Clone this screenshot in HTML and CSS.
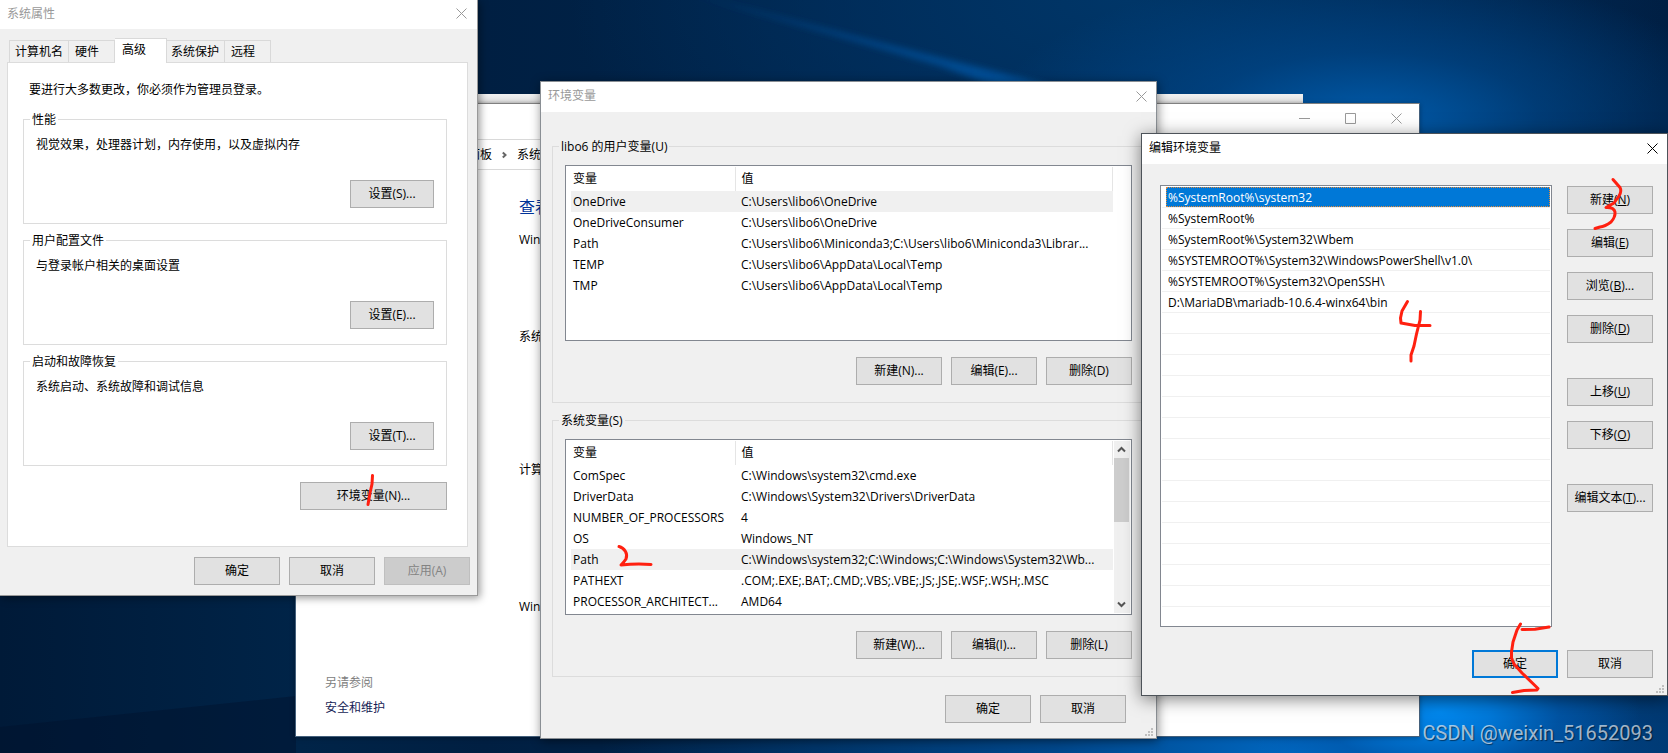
FILE: index.html
```html
<!DOCTYPE html>
<html lang="zh-CN">
<head>
<meta charset="utf-8">
<title>环境变量</title>
<link rel="stylesheet" href="styles.css">
</head>
<body>
<main class="desktop">
  <svg class="wallpaper" width="1668" height="753" viewBox="0 0 1668 753" aria-hidden="true">
    <defs>
      <filter id="soft" x="-20%" y="-50%" width="140%" height="200%"><feGaussianBlur stdDeviation="3"/></filter>
      <linearGradient id="beam" x1="0" x2="1"><stop offset="0" stop-color="#00468a" stop-opacity=".45"/><stop offset="1" stop-color="#0058a8" stop-opacity=".9"/></linearGradient>
    </defs>
    <path d="M690 -6L1045 84L1070 96L1020 96L940 66Z" fill="url(#beam)" filter="url(#soft)"/>
    <path d="M0 727L296 696V753H0Z" fill="#00112c" fill-opacity=".45"/>
  </svg>

  <div class="window window-rear"></div>

  <section class="window window-system" aria-label="系统">
    <header class="system-caption">
      <button class="caption-btn" aria-label="最小化"><svg width="11" height="11" viewBox="0 0 11 11"><path d="M0 5.5H11"/></svg></button>
      <button class="caption-btn" aria-label="最大化"><svg width="11" height="11" viewBox="0 0 11 11"><path d="M.5.5H10.5V10.5H.5Z"/></svg></button>
      <button class="caption-btn" aria-label="关闭"><svg width="11" height="11" viewBox="0 0 11 11"><path d="M.5.5L10.5 10.5M10.5.5L.5 10.5"/></svg></button>
    </header>
    <nav class="address">
      <span>控制面板</span>
      <svg width="5" height="8" viewBox="0 0 5 8"><path d="M.8 1.500L3.500 4L.8 6.500"/></svg>
      <span>系统</span>
    </nav>
    <div class="system-body">
      <aside class="see-also">
        <span class="see-also-title">另请参阅</span>
        <a href="#">安全和维护</a>
      </aside>
      <div class="system-info">
        <h1>查看</h1>
        <p class="info-edition">Windows</p>
        <p class="info-system">系统</p>
        <p class="info-computer">计算机</p>
        <p class="info-activation">Windows</p>
      </div>
    </div>
  </section>

  <section class="window window-props" aria-label="系统属性">
    <header class="titlebar">
      <span>系统属性</span>
      <button class="close" aria-label="关闭"><svg width="11" height="11" viewBox="0 0 11 11"><path d="M.5.5L10.5 10.5M10.5.5L.5 10.5"/></svg></button>
    </header>
    <div class="props-body">
      <div class="tabs" role="tablist">
        <button class="tab tab-name" role="tab">计算机名</button>
        <button class="tab tab-short" role="tab">硬件</button>
        <button class="tab tab-active" role="tab" aria-selected="true">高级</button>
        <button class="tab tab-guard" role="tab">系统保护</button>
        <button class="tab tab-short" role="tab">远程</button>
      </div>
      <div class="panel">
        <p class="notice">要进行大多数更改，你必须作为管理员登录。</p>
        <fieldset class="group">
          <legend>性能</legend>
          <p>视觉效果，处理器计划，内存使用，以及虚拟内存</p>
          <button class="btn btn-settings">设置(S)...</button>
        </fieldset>
        <fieldset class="group">
          <legend>用户配置文件</legend>
          <p>与登录帐户相关的桌面设置</p>
          <button class="btn btn-settings">设置(E)...</button>
        </fieldset>
        <fieldset class="group">
          <legend>启动和故障恢复</legend>
          <p>系统启动、系统故障和调试信息</p>
          <button class="btn btn-settings">设置(T)...</button>
        </fieldset>
        <button class="btn btn-env">环境变量(N)...</button>
      </div>
      <div class="row props-footer">
        <button class="btn">确定</button>
        <button class="btn">取消</button>
        <button class="btn" disabled>应用(A)</button>
      </div>
    </div>
  </section>

  <section class="window window-env" aria-label="环境变量">
    <header class="titlebar">
      <span>环境变量</span>
      <button class="close" aria-label="关闭"><svg width="11" height="11" viewBox="0 0 11 11"><path d="M.5.5L10.5 10.5M10.5.5L.5 10.5"/></svg></button>
    </header>
    <div class="env-body">
      <fieldset class="group env-group">
        <legend>libo6 的用户变量(U)</legend>
        <div class="listbox">
          <table class="vars">
            <thead><tr><th>变量</th><th>值</th></tr></thead>
            <tbody>
              <tr class="current"><td>OneDrive</td><td>C:\Users\libo6\OneDrive</td></tr>
              <tr><td>OneDriveConsumer</td><td>C:\Users\libo6\OneDrive</td></tr>
              <tr><td>Path</td><td>C:\Users\libo6\Miniconda3;C:\Users\libo6\Miniconda3\Librar...</td></tr>
              <tr><td>TEMP</td><td>C:\Users\libo6\AppData\Local\Temp</td></tr>
              <tr><td>TMP</td><td>C:\Users\libo6\AppData\Local\Temp</td></tr>
            </tbody>
          </table>
        </div>
        <div class="row">
          <button class="btn">新建(N)...</button>
          <button class="btn">编辑(E)...</button>
          <button class="btn">删除(D)</button>
        </div>
      </fieldset>
      <fieldset class="group env-group">
        <legend>系统变量(S)</legend>
        <div class="listbox">
          <table class="vars">
            <thead><tr><th>变量</th><th>值</th></tr></thead>
            <tbody>
              <tr><td>ComSpec</td><td>C:\Windows\system32\cmd.exe</td></tr>
              <tr><td>DriverData</td><td>C:\Windows\System32\Drivers\DriverData</td></tr>
              <tr><td>NUMBER_OF_PROCESSORS</td><td>4</td></tr>
              <tr><td>OS</td><td>Windows_NT</td></tr>
              <tr class="current"><td>Path</td><td>C:\Windows\system32;C:\Windows;C:\Windows\System32\Wb...</td></tr>
              <tr><td>PATHEXT</td><td>.COM;.EXE;.BAT;.CMD;.VBS;.VBE;.JS;.JSE;.WSF;.WSH;.MSC</td></tr>
              <tr><td>PROCESSOR_ARCHITECT...</td><td>AMD64</td></tr>
            </tbody>
          </table>
          <div class="scrollbar">
            <svg width="9" height="7" viewBox="0 0 9 7"><path d="M1 5.5L4.5 2L8 5.5"/></svg>
            <div class="thumb"></div>
            <svg width="9" height="7" viewBox="0 0 9 7"><path d="M1 1.5L4.5 5L8 1.5"/></svg>
          </div>
        </div>
        <div class="row">
          <button class="btn">新建(W)...</button>
          <button class="btn">编辑(I)...</button>
          <button class="btn">删除(L)</button>
        </div>
      </fieldset>
      <div class="row env-footer">
        <button class="btn">确定</button>
        <button class="btn">取消</button>
      </div>
    </div>
    <svg class="grip" width="9" height="9" viewBox="0 0 9 9"><path d="M6 0h2v2h-2zM3 3h2v2h-2zM6 3h2v2h-2zM0 6h2v2h-2zM3 6h2v2h-2zM6 6h2v2h-2z"/></svg>
  </section>

  <section class="window window-edit" aria-label="编辑环境变量">
    <header class="titlebar titlebar-active">
      <span>编辑环境变量</span>
      <button class="close" aria-label="关闭"><svg width="11" height="11" viewBox="0 0 11 11"><path d="M.5.5L10.5 10.5M10.5.5L.5 10.5"/></svg></button>
    </header>
    <div class="edit-body">
      <div class="edit-main">
        <ul class="paths">
          <li class="selected">%SystemRoot%\system32</li>
          <li>%SystemRoot%</li>
          <li>%SystemRoot%\System32\Wbem</li>
          <li>%SYSTEMROOT%\System32\WindowsPowerShell\v1.0\</li>
          <li>%SYSTEMROOT%\System32\OpenSSH\</li>
          <li>D:\MariaDB\mariadb-10.6.4-winx64\bin</li>
        </ul>
        <div class="side">
          <button class="btn">新建(<u>N</u>)</button>
          <button class="btn">编辑(<u>E</u>)</button>
          <button class="btn">浏览(<u>B</u>)...</button>
          <button class="btn">删除(<u>D</u>)</button>
          <button class="btn side-break">上移(<u>U</u>)</button>
          <button class="btn">下移(<u>O</u>)</button>
          <button class="btn side-break">编辑文本(<u>T</u>)...</button>
        </div>
      </div>
      <div class="row edit-footer">
        <button class="btn btn-default">确定</button>
        <button class="btn">取消</button>
      </div>
    </div>
    <svg class="grip" width="9" height="9" viewBox="0 0 9 9"><path d="M6 0h2v2h-2zM3 3h2v2h-2zM6 3h2v2h-2zM0 6h2v2h-2zM3 6h2v2h-2zM6 6h2v2h-2z"/></svg>
  </section>

  <svg class="marks" width="1668" height="753" viewBox="0 0 1668 753" aria-hidden="true">
    <path d="M372.5 475.5L372 484L370 493L368 504.500"/>
    <path d="M619 546.500Q623 547.500 625.500 551.500Q627.500 555 626 559Q624 562 621 565Q636 563.500 651 564.500"/>
    <path d="M1613 179.500L1620 187.500Q1622 191 1619 196L1614 203L1606 207.500Q1614 207 1615 212Q1615.500 217 1611 222Q1605 226.500 1600 227L1595 228.500"/>
    <path d="M1407.500 301.500L1402 311L1400.500 318L1401 323L1415 325.500L1430 325.500M1420.500 311.500L1420 320L1416.500 334L1414 346L1411 355V361"/>
    <path d="M1520.500 624L1517 630L1513 642L1511.500 652V658L1514 664L1522 673L1538 688.500L1537 690L1524 690.500L1512.500 692.500M1522 629.500L1535 629.300L1549 627"/>
  </svg>

  <div class="watermark">CSDN @weixin_51652093</div>
</main>
</body>
</html>
```

FILE: styles.css
```css
* { box-sizing: border-box; }

body {
  margin: 0;
  font: 12px/16px "Open Sans", "Noto Sans CJK SC", sans-serif;
  color: #000;
}

p, h1, ul { margin: 0; padding: 0; }

button { font: inherit; color: inherit; padding: 0; }

.desktop {
  position: relative;
  min-height: 100vh;
  overflow: hidden;
  background:
    radial-gradient(ellipse 200px 90px at 1440px 712px, #0088ee 0%, #0078d8 25%, rgba(0, 90, 175, .7) 60%, rgba(0, 80, 160, 0) 100%),
    radial-gradient(ellipse 700px 200px at 1300px 753px, #0068c2 0%, rgba(0, 85, 165, .7) 35%, rgba(0, 60, 120, 0) 100%),
    radial-gradient(ellipse 380px 150px at 1370px 120px, #005bab 0%, rgba(0, 75, 145, .6) 45%, rgba(0, 50, 100, 0) 100%),
    radial-gradient(ellipse 560px 260px at 1130px 0, #003668 0%, rgba(0, 50, 100, .6) 50%, rgba(0, 30, 70, 0) 100%),
    linear-gradient(90deg, #001a38 0%, #002448 18%, #001f42 29%, #002850 60%, #001e42 100%);
}

.wallpaper { position: absolute; left: 0; top: 0; }

.window { position: absolute; border: 1px solid #6e7780; background: #f0f0f0; }

.titlebar {
  display: flex;
  align-items: center;
  justify-content: space-between;
  height: 30px;
  padding: 0 9px 2px 7px;
  background: #fff;
  color: #999;
}

.titlebar-active { color: #000; }

.close, .caption-btn { display: flex; border: 0; background: none; }

.close svg, .caption-btn svg, .address svg { fill: none; stroke: currentColor; }

.btn {
  width: 86px;
  height: 28px;
  border: 1px solid #adadad;
  background: #e1e1e1;
}

.btn:disabled { border-color: #bfbfbf; background: #ccc; color: #838383; }

.btn-default { border: 2px solid #0078d7; }

.row { display: flex; justify-content: flex-end; gap: 9px; }

.group {
  display: flex;
  flex-direction: column;
  min-width: 0;
  margin: 0;
  padding: 10px 12px 15px;
  border: 1px solid #dcdcdc;
}

.group legend { margin-left: -6px; padding: 0 2px; line-height: 15px; }

.grip { position: absolute; right: 2px; bottom: 1px; fill: #bfbfbf; }

/* Explorer windows at the back */
.window-rear {
  left: 300px;
  top: 94px;
  width: 1003px;
  height: 60px;
  border: 0;
  background: linear-gradient(#f2f2f2, #e4e4e4 6px, #c8c8c8 10px);
}

.window-system {
  left: 295px;
  top: 103px;
  width: 1125px;
  background: #fff;
  border-color: #44607c;
  border-top-color: #808080;
  box-shadow: 0 1px 5px rgba(0, 0, 0, .3);
}

.system-caption {
  display: flex;
  justify-content: flex-end;
  gap: 35px;
  height: 35px;
  padding: 9px 17px 0 0;
  color: #999;
}

.address {
  display: flex;
  align-items: center;
  gap: 10px;
  height: 31px;
  padding-left: 148px;
  border: solid #d9d9d9;
  border-width: 1px 0;
}

.address svg { stroke: #666; stroke-width: 2; }

.system-body { display: flex; height: 566px; }

.see-also {
  display: flex;
  flex-direction: column;
  justify-content: flex-end;
  gap: 9px;
  width: 223px;
  padding: 0 0 20px 29px;
}

.see-also-title { color: #808080; }

.see-also a { color: #151c55; text-decoration: none; }

.system-info h1 { padding-top: 26px; font-size: 16px; line-height: 22px; font-weight: 400; color: #039; }

.info-edition { padding-top: 14px; }

.info-system { padding-top: 81px; }

.info-computer { padding-top: 117px; }

.info-activation { padding-top: 121px; }

/* System properties */
.window-props {
  left: 0;
  top: 0;
  width: 478px;
  border-width: 0 1px 1px 0;
  border-color: #999;
  box-shadow: 2px 2px 8px rgba(0, 0, 0, .4);
}

.window-props .titlebar { height: 29px; padding-right: 10px; }

.props-body { padding: 9px 7px 10px; }

.tabs { display: flex; align-items: flex-end; height: 24px; padding-left: 2px; }

.tab { height: 22px; border: 1px solid #d9d9d9; border-width: 1px 1px 0 0; background: #f0f0f0; text-align: left; padding-left: 6px; }

.tab-name { width: 60px; border-left-width: 1px; padding-left: 5px; }

.tab-short { width: 46px; }

.tab-active {
  z-index: 1;
  width: 52px;
  height: 25px;
  margin-bottom: -1px;
  padding: 0 0 3px 7px;
  background: #fff;
}

.tab-guard { width: 58px; padding-left: 4px; }

.panel {
  display: flex;
  flex-direction: column;
  gap: 9px;
  width: 461px;
  padding: 19px 20px 36px 15px;
  border: 1px solid #dcdcdc;
  background: #fff;
}

.notice { padding: 0 0 5px 6px; }

.btn-settings { width: 84px; margin-top: 27px; align-self: flex-end; }

.btn-env { width: 147px; margin-top: 7px; align-self: flex-end; }

.props-footer { padding-top: 10px; }

/* Environment variables */
.window-env {
  left: 540px;
  top: 81px;
  width: 617px;
  border-color: #8a8f94;
  box-shadow: 1px 2px 10px rgba(0, 0, 0, .45);
}

.env-body { display: flex; flex-direction: column; gap: 10px; padding: 27px 11px 15px; }

.env-group { padding: 11px 12px 17px; }

.listbox {
  display: flex;
  align-items: flex-start;
  height: 176px;
  margin-bottom: 16px;
  padding: 1px 1px 1px 5px;
  border: 1px solid #828790;
  background: #fff;
}

.vars { flex: none; width: 542px; table-layout: fixed; border-collapse: collapse; }

.vars th, .vars td {
  height: 21px;
  padding: 0 0 0 2px;
  text-align: left;
  font-weight: 400;
  line-height: 16px;
  white-space: nowrap;
}

.vars th { height: 24px; border-right: 1px solid #e5e5e5; }

.vars th:first-child { width: 164px; }

.vars th + th, .vars td + td { padding-left: 6px; }

.current { background: #f0f0f0; }

.scrollbar {
  display: flex;
  flex: none;
  flex-direction: column;
  align-items: center;
  width: 16px;
  height: 172px;
  margin-left: 1px;
  padding: 5px 1px 5px 0;
  background: #f0f0f0;
}

.scrollbar svg { fill: none; stroke: #555; stroke-width: 2; }

.thumb { width: 100%; height: 64px; margin: 5px 0 auto; background: #cdcdcd; }

.env-footer { padding: 8px 19px 0 0; }

/* Edit environment variable */
.window-edit {
  left: 1141px;
  top: 133px;
  width: 527px;
  border-color: #4d5359;
  box-shadow: 0 3px 16px rgba(0, 0, 0, .5);
}

.edit-body { padding: 21px 14px 17px 18px; }

.edit-main { display: flex; gap: 15px; }

.paths {
  flex: 1;
  height: 442px;
  padding: 1px;
  border: 1px solid #828790;
  background: repeating-linear-gradient(#fff 0 20px, #f0f0f0 20px 21px) content-box, #fff;
  list-style: none;
}

.paths li { height: 21px; padding-left: 6px; line-height: 22px; }

.paths .selected {
  height: 20px;
  margin: 0 0 1px 4px;
  padding-left: 2px;
  outline: 1px dotted #e08a3c;
  outline-offset: -1px;
  background: #0078d7;
  color: #fff;
}

.side { display: flex; flex-direction: column; gap: 15px; padding-top: 1px; }

.side-break { margin-top: 20px; }

.edit-footer { padding-top: 23px; }

/* Pen marks over the windows */
.marks {
  position: absolute;
  left: 0;
  top: 0;
  pointer-events: none;
  fill: none;
  stroke: #ff2010;
  stroke-width: 3;
  stroke-linecap: round;
  stroke-linejoin: round;
}

.watermark {
  position: absolute;
  right: 15px;
  bottom: 8px;
  font: 20px/24px Roboto, sans-serif;
  color: rgba(255, 255, 255, .65);
  text-shadow: 1px 1px 1px rgba(0, 0, 0, .5);
}
```
